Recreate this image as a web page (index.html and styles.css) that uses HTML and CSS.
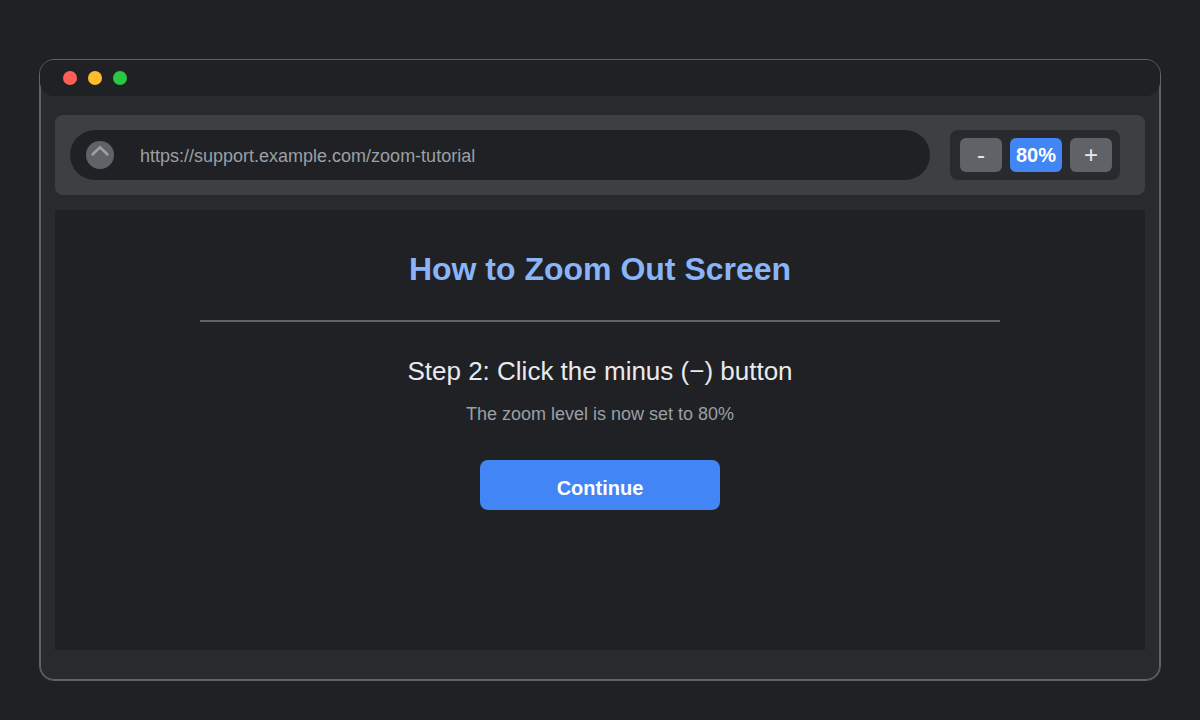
FILE: index.html
```html
<!DOCTYPE html>
<html lang="en">

<head>
    <meta charset="UTF-8">
    <meta name="viewport" content="width=device-width, initial-scale=1.0">
    <title>How to Zoom Out Screen</title>
    <link rel="stylesheet" href="styles.css">
</head>

<body>
    <div class="window">
        <div class="titlebar">
            <span class="dot red"></span>
            <span class="dot yellow"></span>
            <span class="dot green"></span>
        </div>
        <div class="toolbar">
            <div class="urlbar">
                <svg class="urlicon" viewBox="0 0 28 28" aria-hidden="true">
                    <circle cx="14" cy="14" r="14" fill="#5f6368" />
                    <path d="M6.5 13.5L14 6.3L21.5 13.5" fill="none" stroke="#9aa0a6" stroke-width="2.5" stroke-linecap="round" />
                </svg>
                <input class="url" type="text" aria-label="Address" value="https://support.example.com/zoom-tutorial">
            </div>
            <div class="zoom">
                <button class="zoombutton" type="button" aria-label="Zoom out">-</button>
                <span class="zoomlevel">80%</span>
                <button class="zoombutton" type="button" aria-label="Zoom in">+</button>
            </div>
        </div>
        <main class="content">
            <h1 class="title">How to Zoom Out Screen</h1>
            <hr class="divider">
            <h2 class="step">Step 2: Click the minus (−) button</h2>
            <p class="note">The zoom level is now set to 80%</p>
            <button class="continue" type="button">Continue</button>
        </main>
    </div>
</body>

</html>
```
FILE: styles.css
```css
* {
    box-sizing: border-box;
}

body {
    display: flex;
    min-height: 100vh;
    margin: 0;
    padding: 59px 39px 39px;
    background-color: #202124;
    color: #e8eaed;
    font-family: "Liberation Sans", Arial, sans-serif;
}

button,
input {
    font-family: inherit;
}

.window {
    display: flex;
    flex-direction: column;
    flex: 1;
    min-width: 0;
    padding-bottom: 30px;
    border: 1px solid #5f6368;
    border-radius: 15px;
    background-color: #292a2d;
    box-shadow: inset 0 0 0 1px #5f6368;
}

.titlebar {
    display: flex;
    align-items: center;
    gap: 11px;
    height: 36px;
    padding: 0 23px;
    border-radius: 14px;
    background-color: #202124;
}

.dot {
    width: 14px;
    height: 14px;
    border-radius: 50%;
}

.red {
    background-color: #ff5f57;
}

.yellow {
    background-color: #ffbd2e;
}

.green {
    background-color: #28c940;
}

.toolbar {
    display: flex;
    gap: 20px;
    margin: 19px 15px 15px;
    padding: 15px 25px 15px 15px;
    border-radius: 8px;
    background-color: #3c4043;
}

.urlbar {
    display: flex;
    align-items: center;
    flex: 1;
    min-width: 0;
    gap: 26px;
    height: 50px;
    padding: 0 16px;
    border-radius: 25px;
    background-color: #202124;
}

.urlicon {
    flex: none;
    width: 28px;
    height: 28px;
}

.url {
    flex: 1;
    min-width: 0;
    padding: 2px 0 0;
    border: none;
    outline: none;
    background: none;
    color: #9aa0a6;
    font-size: 18px;
}

.zoom {
    display: flex;
    align-items: center;
    gap: 8px;
    padding: 0 8px 0 10px;
    border-radius: 8px;
    background-color: #292a2d;
}

.zoombutton {
    width: 42px;
    height: 34px;
    padding: 0;
    border: none;
    border-radius: 6px;
    background-color: #5f6368;
    color: #e8eaed;
    font-size: 24px;
    line-height: 34px;
}

.zoomlevel {
    width: 52px;
    height: 34px;
    border-radius: 6px;
    background-color: #4285f4;
    color: white;
    font-size: 20px;
    font-weight: bold;
    line-height: 34px;
    text-align: center;
}

.content {
    display: flex;
    flex-direction: column;
    align-items: center;
    flex: 1;
    margin: 0 15px;
    padding: 40px 20px;
    background-color: #202124;
}

.title {
    margin: 0;
    color: #8ab4f8;
    font-size: 32px;
    line-height: 38px;
}

.divider {
    width: 100%;
    max-width: 800px;
    height: 2px;
    margin: 32px 0 30px;
    border: none;
    background-color: #5f6368;
}

.step {
    margin: 0;
    font-size: 26px;
    font-weight: normal;
    line-height: 38px;
}

.note {
    margin: 14px 0 36px;
    color: #9aa0a6;
    font-size: 18px;
    line-height: 20px;
}

.continue {
    width: 240px;
    height: 50px;
    padding: 6px 0 0;
    border: none;
    border-radius: 8px;
    background-color: #4285f4;
    color: white;
    font-size: 20px;
    font-weight: bold;
}
```
